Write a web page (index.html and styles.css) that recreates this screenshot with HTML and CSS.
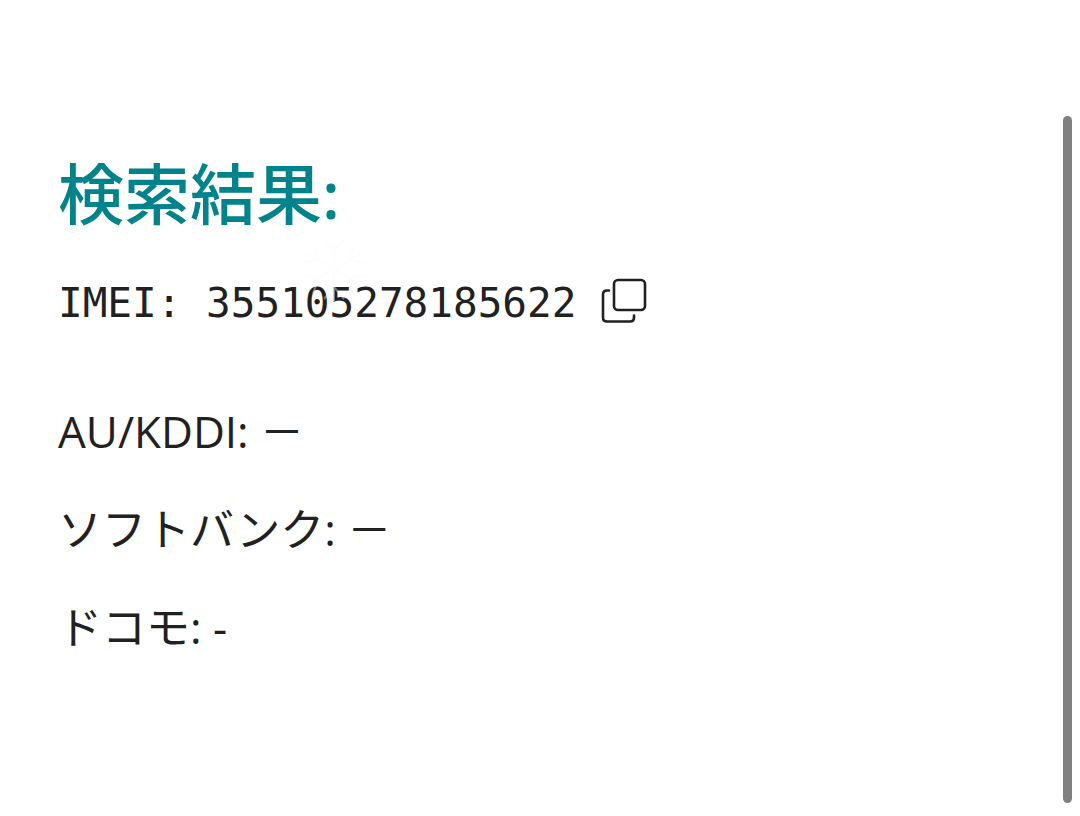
FILE: index.html
```html
<!DOCTYPE html>
<html lang="ja">
<head>
<meta charset="utf-8">
<title>検索結果</title>
<link rel="stylesheet" href="styles.css">
</head>
<body>
<main class="result">
  <h1 class="result-title">検索結果:</h1>
  <div class="imei">
    <span class="imei-text">IMEI: 355105278185622</span>
    <button class="copy" type="button" aria-label="コピー">
      <svg width="48" height="48" viewBox="0 0 48 48" fill="none" stroke="currentColor" stroke-width="2.6" stroke-linecap="round" stroke-linejoin="round"><rect x="14" y="3" width="31" height="30" rx="4"/><path d="M9 13.500H7q-4 0-4 4v23q0 4 4 4h23q4 0 4-4v-2"/></svg>
    </button>
    <svg class="watermark" width="72" height="72" viewBox="0 0 72 72" fill="none" stroke="currentColor" stroke-width="2" aria-hidden="true"><path d="M36 4v64M8 20l56 32M8 52l56-32M26 6l10 12L46 6M26 66l10-12 10 12M4 30l17-3-6-15M68 30l-17-3 6-15M4 42l17 3-6 15M68 42l-17 3 6 15"/></svg>
  </div>
  <p class="carrier">AU/KDDI: －</p>
  <p class="carrier">ソフトバンク: －</p>
  <p class="carrier">ドコモ: -</p>
</main>
<div class="scrollbar"></div>
</body>
</html>
```
FILE: styles.css
```css
body {
  margin: 0;
  background: #fff;
  color: #212121;
  font-family: "Open Sans", "Noto Sans CJK JP", sans-serif;
}
.result {
  padding: 143px 58px 60px;
}
.result-title {
  margin: 0 0 28px;
  font-size: 66px;
  line-height: 100px;
  font-weight: 500;
  color: #00838a;
  font-family: "Noto Sans", "Noto Sans CJK JP", sans-serif;
}
.imei {
  position: relative;
  display: flex;
  align-items: center;
  gap: 24px;
  height: 60px;
  margin-bottom: 67px;
}
.imei-text {
  padding-top: 4px;
  font-family: "DejaVu Sans Mono", monospace;
  font-size: 41px;
}
.copy {
  border: 0;
  padding: 0;
  background: none;
  color: #212121;
  display: flex;
}
.watermark {
  position: absolute;
  left: 240px;
  top: -38px;
  color: #fbfbfb;
  opacity: 0.4;
  pointer-events: none;
}
.carrier {
  margin: 0 0 32px;
  font-size: 44px;
  line-height: 66px;
}
.scrollbar {
  position: fixed;
  top: 116px;
  right: 8px;
  bottom: 13px;
  width: 9px;
  border-radius: 5px;
  background: #808080;
}
```
